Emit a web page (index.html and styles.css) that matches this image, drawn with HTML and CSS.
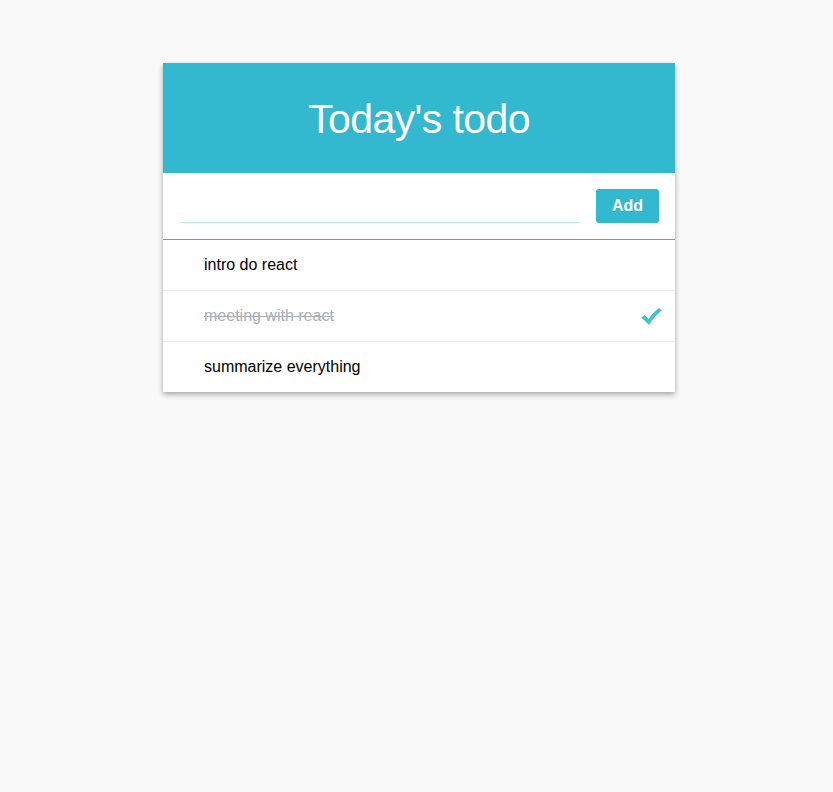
FILE: index.html
```html
<!DOCTYPE html>
<html lang="en">
<head>
<meta charset="utf-8">
<title>Today's todo</title>
<link rel="stylesheet" href="styles.css">
</head>
<body>
<main class="card">
  <header class="card-header">
    <h1 class="title">Today's todo</h1>
  </header>
  <form class="add-row">
    <input class="add-input" type="text" aria-label="New todo">
    <button class="add-btn" type="button">Add</button>
  </form>
  <ul class="todo-list">
    <li class="todo-item"><span class="todo-text">intro do react</span></li>
    <li class="todo-item done"><span class="todo-text">meeting with react</span>
      <svg class="check" width="21" height="17" viewBox="0 0 21 17" aria-hidden="true">
        <path d="M0.3 9.6 L3.6 6.9 L7.6 10.9 C10.5 6.6 14.2 2.8 18.2 0.1 L20.8 2.6 C16 6.2 11.4 11.2 8.1 16.9 Z" fill="#3fc1d7"/>
      </svg>
    </li>
    <li class="todo-item"><span class="todo-text">summarize everything</span></li>
  </ul>
</main>
</body>
</html>
```

FILE: styles.css
```css
* { box-sizing: border-box; }
html, body { margin: 0; padding: 0; }
body {
  background: #f9f9f9;
  font-family: "Liberation Sans", Arial, Helvetica, sans-serif;
  padding: 63px 0 0 5px;
  min-height: 792px;
}
.card {
  width: 512px;
  margin: 0 auto;
  background: #ffffff;
  box-shadow: 0 3px 6px rgba(0,0,0,0.16), 0 2px 5px rgba(0,0,0,0.2);
}
.card-header {
  background: #32b8cf;
  height: 110px;
  display: flex;
  align-items: center;
  justify-content: center;
}
.title {
  margin: 0;
  color: #ffffff;
  font-weight: 400;
  font-size: 41px;
  letter-spacing: -0.6px;
  line-height: 1;
  padding-top: 2px;
}
.add-row {
  display: flex;
  align-items: flex-end;
  gap: 16px;
  padding: 16px;
  margin: 0;
  border-bottom: 1px solid #3ab2c7;
}
.add-input {
  flex: 1;
  height: 34px;
  border: none;
  border-bottom: 1px solid #b8eef5;
  outline: none;
  background: transparent;
  font-family: inherit;
  font-size: 16px;
  padding: 0;
}
.add-btn {
  width: 63px;
  height: 34px;
  border: none;
  border-radius: 3px;
  background: #32b8cf;
  color: #ffffff;
  font-family: inherit;
  font-weight: 700;
  font-size: 16px;
  padding: 0;
}
.todo-list {
  list-style: none;
  margin: 0;
  padding: 0;
}
.todo-item {
  height: 51px;
  display: flex;
  align-items: center;
  justify-content: space-between;
  padding: 0 13px 0 41px;
  border-bottom: 1px solid #eeeeee;
  font-size: 16px;
  color: #000000;
}
.todo-item:last-child {
  border-bottom: none;
  height: 50px;
}
.todo-item.done .todo-text {
  color: #a9b0b5;
  text-decoration: line-through;
}
.check { display: block; }
```
